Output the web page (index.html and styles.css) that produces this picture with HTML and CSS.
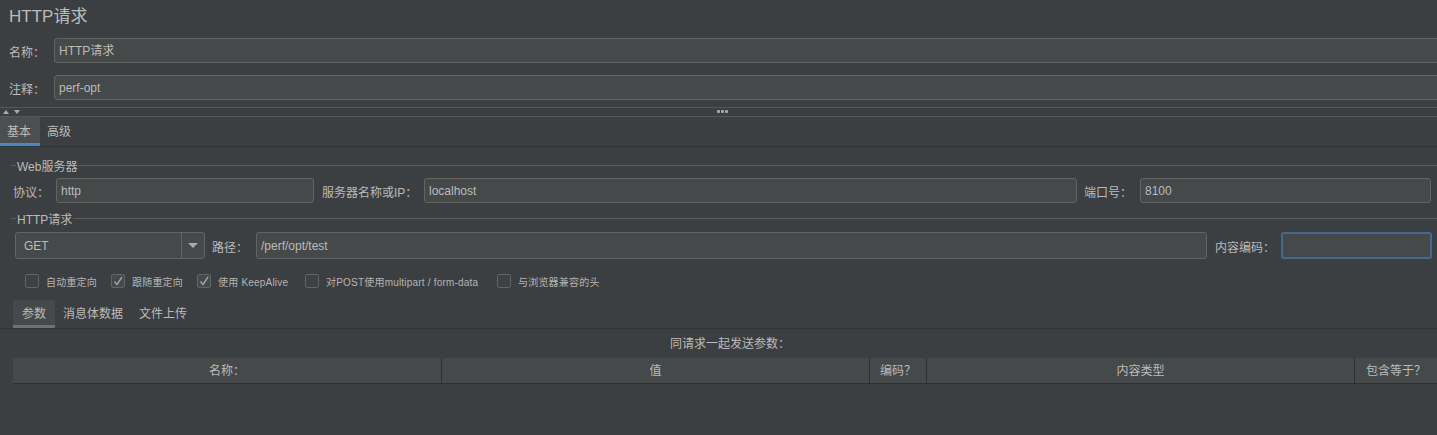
FILE: index.html
```html
<!DOCTYPE html>
<html lang="zh-CN">
<head>
<meta charset="utf-8">
<title>HTTP请求</title>
<link rel="stylesheet" href="styles.css">
</head>
<body>
<div class="page">
  <div class="title">HTTP请求</div>
  <div class="name-row first">
    <span class="lbl-top">名称：</span>
    <div class="field wide">HTTP请求</div>
  </div>
  <div class="name-row">
    <span class="lbl-top">注释：</span>
    <div class="field wide">perf-opt</div>
  </div>

  <div class="splitter">
    <div class="arrows">
      <svg width="20" height="6" viewBox="0 0 20 6"><polygon points="4,1 7,5 1,5" fill="#a9abad"/><polygon points="12,1 18,1 15,5" fill="#a9abad"/></svg>
    </div>
    <div class="dots"><i></i><i></i><i></i></div>
  </div>

  <div class="tabs">
    <div class="tab active">基本</div>
    <div class="tab">高级</div>
  </div>

  <div class="legend"><span class="dash"></span><span class="legend-text">Web服务器</span><span class="rule"></span></div>
  <div class="server-row">
    <span class="lbl l-proto">协议：</span>
    <div class="field proto">http</div>
    <span class="lbl l-server">服务器名称或IP：</span>
    <div class="field server">localhost</div>
    <span class="lbl l-port">端口号：</span>
    <div class="field port">8100</div>
  </div>

  <div class="legend legend2"><span class="dash"></span><span class="legend-text">HTTP请求</span><span class="rule"></span></div>
  <div class="req-row">
    <div class="select">
      <span class="sel-text">GET</span>
      <span class="sel-btn"><svg width="10" height="6" viewBox="0 0 10 6"><polygon points="0,0 10,0 5,5" fill="#a9abad"/></svg></span>
    </div>
    <span class="lbl l-path">路径：</span>
    <div class="field path">/perf/opt/test</div>
    <span class="lbl l-enc">内容编码：</span>
    <div class="field enc focus"></div>
  </div>

  <div class="checks">
    <label class="chk"><span class="box"></span><span class="ctext">自动重定向</span></label>
    <label class="chk"><span class="box checked"><svg width="12" height="12" viewBox="0 0 12 12"><polyline points="2.5,6.5 5,9.5 10,2" fill="none" stroke="#a0a2a4" stroke-width="1.4"/></svg></span><span class="ctext">跟随重定向</span></label>
    <label class="chk"><span class="box checked"><svg width="12" height="12" viewBox="0 0 12 12"><polyline points="2.5,6.5 5,9.5 10,2" fill="none" stroke="#a0a2a4" stroke-width="1.4"/></svg></span><span class="ctext">使用 KeepAlive</span></label>
    <label class="chk"><span class="box"></span><span class="ctext">对POST使用multipart / form-data</span></label>
    <label class="chk"><span class="box"></span><span class="ctext">与浏览器兼容的头</span></label>
  </div>

  <div class="subtabs">
    <div class="subtab active">参数</div>
    <div class="subtab">消息体数据</div>
    <div class="subtab">文件上传</div>
  </div>

  <div class="params">
    <div class="params-title">同请求一起发送参数：</div>
    <div class="thead">
      <div class="th">名称：</div>
      <div class="th">值</div>
      <div class="th">编码？</div>
      <div class="th">内容类型</div>
      <div class="th last">包含等于？</div>
    </div>
  </div>
</div>
</body>
</html>
```

FILE: styles.css
```css
* { box-sizing: border-box; }
html, body { margin: 0; padding: 0; }
body {
  background: #3c3f41;
  color: #bbbbbb;
  font-family: "Liberation Sans", "Noto Sans CJK SC", sans-serif;
  font-size: 12px;
  width: 1437px;
  height: 435px;
  overflow: hidden;
}
.page { display: flex; flex-direction: column; }

.title {
  height: 38px;
  padding-left: 9px;
  padding-top: 6px;
  font-size: 17px;
  line-height: 22px;
  color: #bbbbbb;
}
.name-row {
  display: flex;
  align-items: center;
  height: 25px;
}
.name-row.first { margin-bottom: 12px; }
.lbl-top { width: 54px; padding-left: 9px; white-space: nowrap; padding-top: 2px; }
.field {
  height: 25px;
  background: #45494a;
  border: 1px solid #646464;
  border-radius: 3px;
  padding: 2px 4px 0;
  line-height: 21px;
  color: #bbbbbb;
  white-space: nowrap;
  overflow: hidden;
}
.field.wide { flex: 1; margin-right: -3px; }

.splitter {
  margin-top: 7px;
  height: 10px;
  border-top: 1px solid #55585a;
  border-bottom: 1px solid #55585a;
  position: relative;
  display: flex;
  align-items: center;
}
.arrows { padding-left: 2px; display: flex; }
.dots {
  position: absolute;
  left: 717px;
  top: 2px;
  display: flex;
  gap: 1px;
}
.dots i {
  display: block;
  width: 3px;
  height: 3px;
  background: #a6a8aa;
  border-radius: 1px;
}

.tabs {
  display: flex;
  height: 30px;
  border-bottom: 1px solid #2f3133;
}
.tab {
  padding: 2px 7px 0;
  line-height: 26px;
  font-size: 12px;
}
.tab.active {
  background: #4b4f51;
  border-bottom: 3px solid #4a88c7;
  width: 40px;
}

.legend {
  display: flex;
  align-items: center;
  margin-top: 11px;
  height: 14px;
}
.dash { width: 5px; height: 1px; background: #5a5d5f; margin-left: 11px; }
.legend-text { padding: 0 1px; }
.rule { flex: 1; height: 1px; background: #5a5d5f; }
.legend2 { margin-top: 8px; }

.server-row {
  display: flex;
  align-items: center;
  padding-left: 13px;
  padding-right: 6px;
  margin-top: 6px;
}
.lbl { white-space: nowrap; padding-top: 2px; }
.l-proto { width: 43px; }
.proto { width: 258px; }
.l-server { width: 102px; margin-left: 8px; }
.server { flex: 1; }
.l-port { width: 56px; margin-left: 7px; }
.port { width: 291px; }

.req-row {
  display: flex;
  align-items: center;
  padding-left: 15px;
  padding-right: 5px;
  margin-top: 7px;
}
.req-row .field { height: 27px; line-height: 23px; }
.select {
  width: 190px;
  height: 27px;
  display: flex;
  background: #45494a;
  border: 1px solid #646464;
  border-radius: 3px;
}
.sel-text { flex: 1; padding-left: 8px; padding-top: 2px; line-height: 23px; }
.sel-btn {
  width: 23px;
  border-left: 1px solid #646464;
  display: flex;
  align-items: center;
  justify-content: center;
}
.l-path { width: 44px; margin-left: 7px; }
.path { flex: 1; }
.l-enc { width: 66px; margin-left: 8px; }
.enc { width: 151px; }
.field.focus { border: 2px solid #44698f; }

.checks {
  display: grid;
  grid-template-columns: 86px 86px 108px 192px auto;
  align-items: center;
  padding-left: 25px;
  margin-top: 14px;
  height: 16px;
  font-size: 10px;
}
.chk { display: flex; align-items: center; gap: 7px; white-space: nowrap; }
.box {
  width: 14px;
  height: 14px;
  flex: none;
  border: 1px solid #626467;
  border-radius: 2px;
  background: #3f4244;
  display: flex;
  align-items: center;
  justify-content: center;
}
.box.checked { background: #45494a; }
.ctext { color: #b4b4b4; letter-spacing: 0.2px; }

.subtabs {
  display: flex;
  margin-top: 11px;
  height: 29px;
  border-bottom: 1px solid #323435;
  padding-left: 13px;
}
.subtab { padding: 2px 8px 0; line-height: 25px; font-size: 12px; white-space: nowrap; }
.subtab.active {
  background: #45494a;
  border-bottom: 3px solid #6f7274;
  padding: 2px 9px 0;
}

.params { padding-left: 13px; }
.params-title {
  text-align: center;
  height: 29px;
  padding-top: 2px;
  line-height: 27px;
  padding-left: 10px;
}
.thead {
  display: grid;
  grid-template-columns: 429px 428px 57px 428px 1fr;
  height: 26px;
  background: #45494a;
  border-bottom: 1px solid #2d2f30;
}
.th {
  text-align: center;
  padding-top: 2px;
  line-height: 23px;
  border-right: 1px solid #2d2f30;
}
.th.last { border-right: none; }
```
